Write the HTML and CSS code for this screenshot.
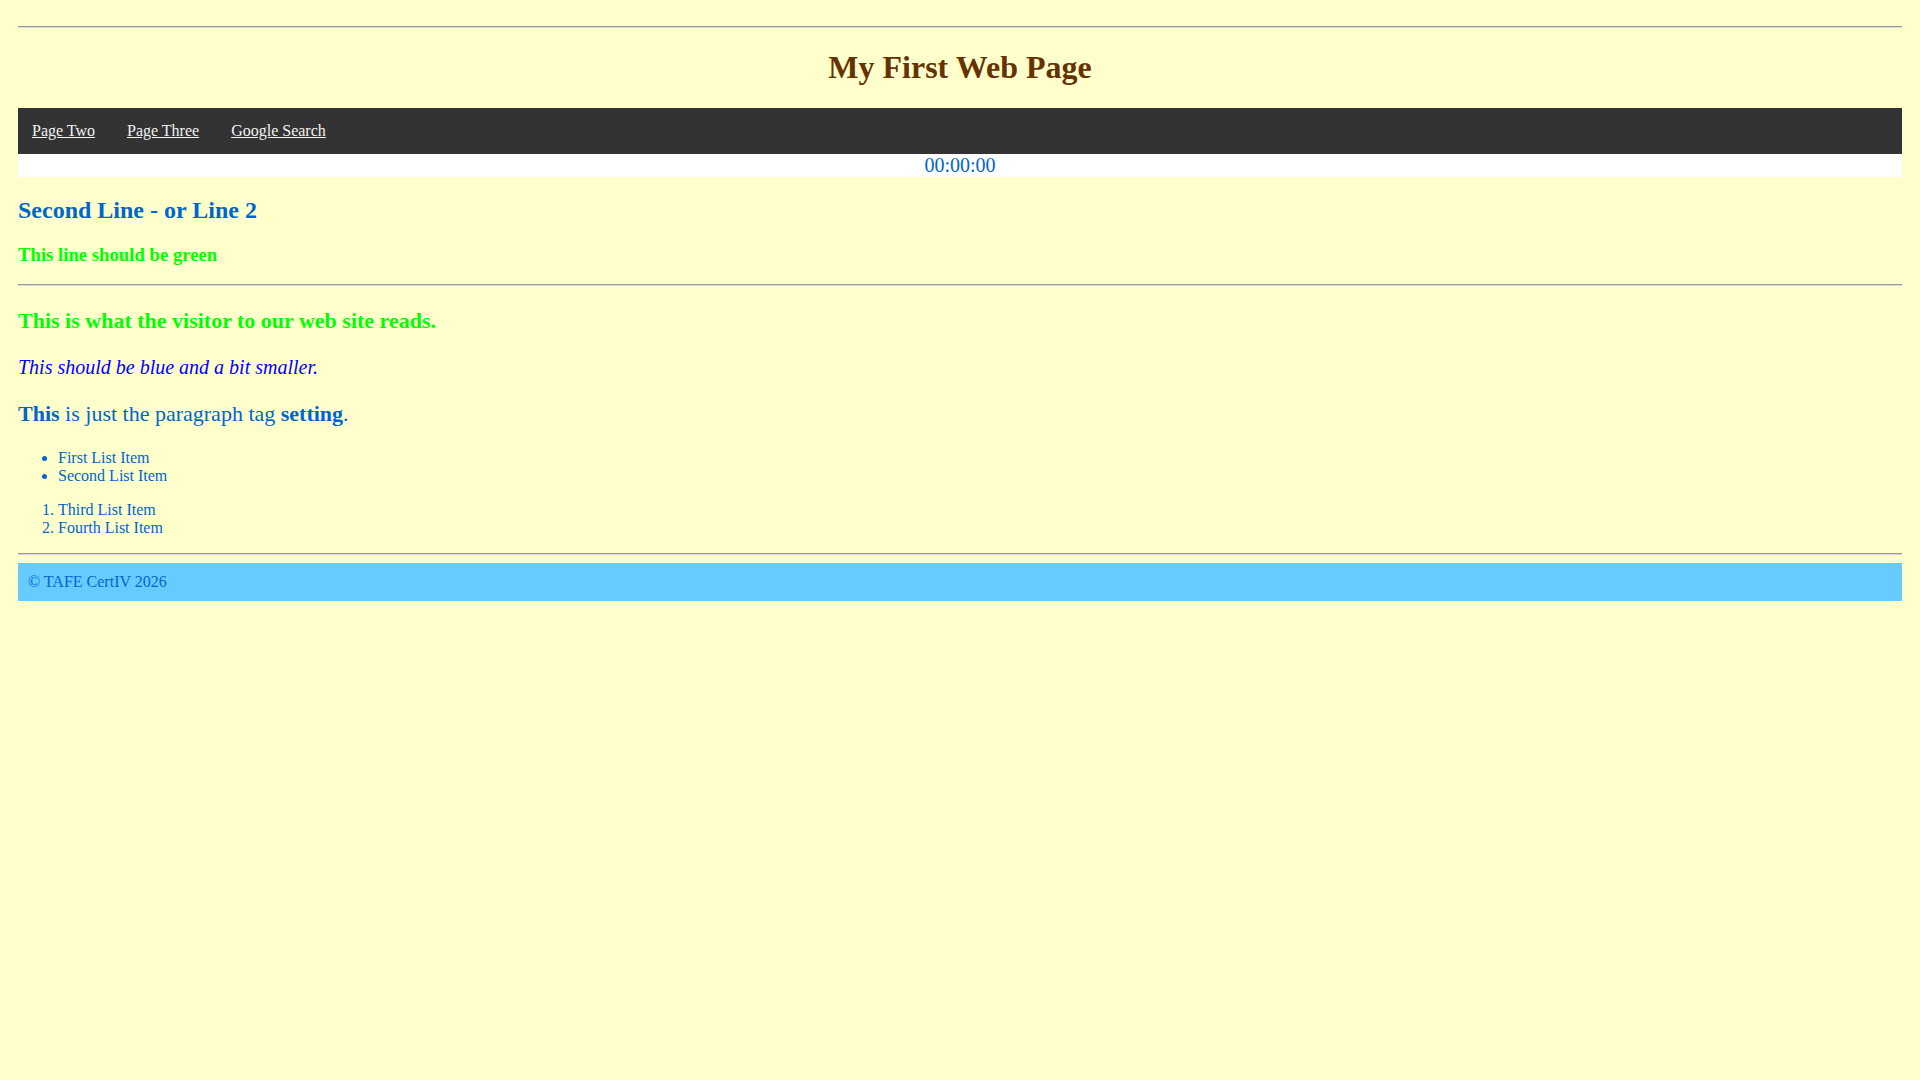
FILE: index.html
```html
<!DOCTYPE html>
<html lang="en">
<head>
<meta charset="utf-8">
<title>My First Web Page</title>
<link rel="stylesheet" href="styles.css">
</head>
<body>
<hr>
<h1 class="title">My First Web Page</h1>
<nav class="topnav">
  <a href="#">Page Two</a>
  <a href="#">Page Three</a>
  <a href="#">Google Search</a>
</nav>
<div class="clock">00:00:00</div>
<h2 class="line-two">Second Line - or Line 2</h2>
<h3 class="green-line">This line should be green</h3>
<hr>
<h2 class="visitor">This is what the visitor to our web site reads.</h2>
<p class="blue-small">This should be blue and a bit smaller.</p>
<p class="para"><strong>This</strong> is just the paragraph tag <strong>setting</strong>.</p>
<ul class="list first-list">
  <li>First List Item</li>
  <li>Second List Item</li>
</ul>
<ol class="list">
  <li>Third List Item</li>
  <li>Fourth List Item</li>
</ol>
<hr>
<footer class="footer">&copy; TAFE CertIV 2026</footer>
</body>
</html>
```
FILE: styles.css
```css
html {
  background: #ffffcc;
}
body {
  margin: 18px;
  font-family: "Liberation Serif", "Times New Roman", serif;
  font-size: 16px;
  color: #0066cc;
}
hr {
  margin: 8px 0;
  height: 0;
  border: none;
  border-top: 1px solid #9a9aa6;
  border-bottom: 1px solid #d8d8d4;
}
.title {
  text-align: center;
  color: #663300;
  font-size: 32px;
  margin: 21.44px 0;
}
.topnav {
  display: flex;
  gap: 4px;
  background: #333333;
}
.topnav a {
  padding: 14px;
  color: #f2f2f2;
  text-decoration: underline;
  font-size: 16px;
}
.clock {
  background: #ffffff;
  text-align: center;
  font-size: 20px;
  color: #0066cc;
}
.line-two {
  color: #0066cc;
  font-size: 24px;
  margin: 19.92px 0;
}
.green-line {
  color: #00ff00;
  font-size: 18.72px;
  margin: 18.72px 0;
}
.visitor {
  color: #00ff00;
  font-size: 22px;
  margin: 22px 0;
}
.blue-small {
  color: #0000ff;
  font-style: italic;
  font-size: 20px;
  margin: 22px 0;
}
.para {
  font-size: 22px;
  margin: 22px 0;
}
.list {
  margin: 16px 0;
  padding-left: 40px;
}
.first-list {
  margin-top: 22px;
}
.footer {
  background: #66ccff;
  padding: 10px;
}
```
